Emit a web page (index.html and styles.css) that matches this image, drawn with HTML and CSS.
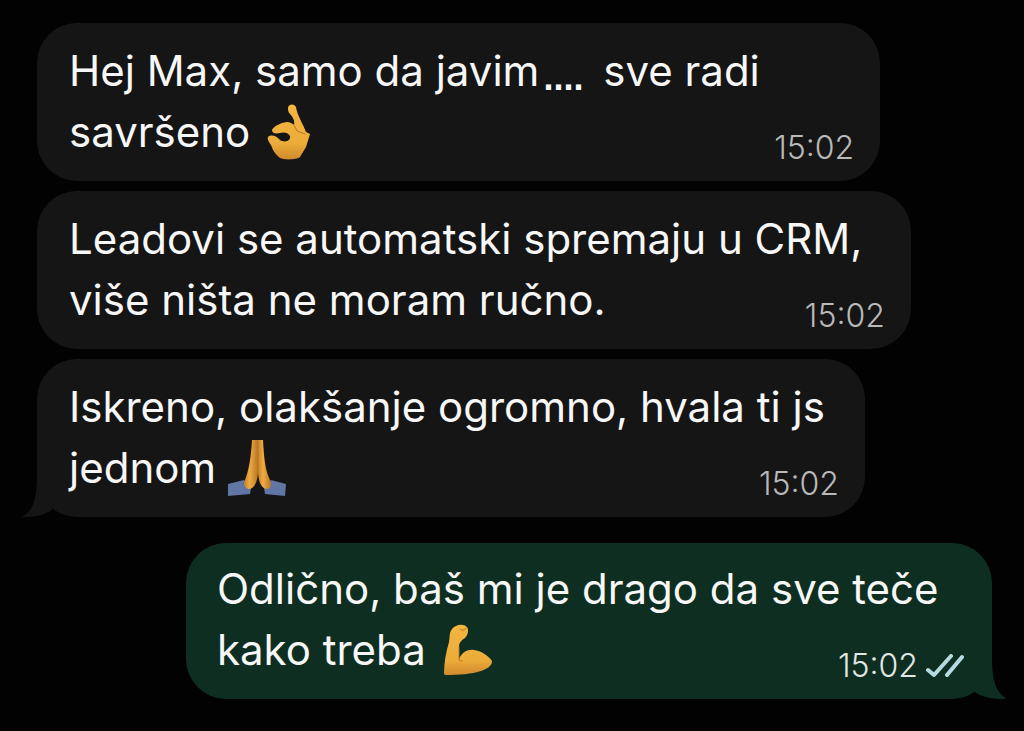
FILE: index.html
```html
<!DOCTYPE html>
<html lang="hr">

<head>
    <meta charset="UTF-8">
    <meta name="viewport" content="width=device-width, initial-scale=1.0">
    <title>Chat</title>
    <link rel="stylesheet" href="styles.css">
</head>

<body>
    <!-- shared emoji colours -->
    <svg class="defs" width="0" height="0" aria-hidden="true">
        <defs>
            <linearGradient id="skin" x1="0" y1="0" x2="0" y2="1">
                <stop offset="0" stop-color="#f3b640" />
                <stop offset="0.7" stop-color="#ecac3a" />
                <stop offset="1" stop-color="#d08a2c" />
            </linearGradient>
            <linearGradient id="palm" x1="0" y1="0" x2="1" y2="0">
                <stop offset="0" stop-color="#c9822a" />
                <stop offset="0.4" stop-color="#f0ac40" />
                <stop offset="1" stop-color="#b87524" />
            </linearGradient>
        </defs>
    </svg>

    <main class="chat">
        <div class="bubble first">
            <p class="text">Hej Max, samo da javim<span class="dots">....</span> sve radi<br>savršeno
                <svg class="emoji ok" viewBox="0 0 70 70" role="img" aria-label="OK">
                    <path fill="url(#skin)" d="M34 11C34 7 40 6 42 10C43 18 49 27 52 35L56 37L52 50L46 60C43 63 29 63 26 61C22 58 19 54 17 48C15 45 13 42 14 40C17 37 23 39 26 43C31 46 37 44 36 39C34 35 29 35 26 36C21 37 18 36 18 33C20 29 26 26 33 25C36 25 39 27 40 28C41 24 39 20 36 17C34 15 34 13 34 11Z" />
                    <path class="crease" d="M40 28L43 34L51 37" />
                </svg>
            </p>
            <time class="time">15:02</time>
        </div>

        <div class="bubble second">
            <p class="text">Leadovi se automatski spremaju u CRM,<br>više ništa ne moram ručno.</p>
            <time class="time">15:02</time>
        </div>

        <div class="bubble third">
            <p class="text">Iskreno, olakšanje ogromno, hvala ti js<br>jednom
                <svg class="emoji pray" viewBox="0 0 75 75" role="img" aria-label="Hvala">
                    <path fill="#6276a5" d="M8 54L24 50L31 58L30 64L8 66ZM66 54L51 50L44 58L45 64L65 66Z" />
                    <path fill="url(#palm)" d="M32 10H38V41C38 50 35 59 29 59C25 59 23 54 25 50C29 40 31 27 32 10Z" />
                    <path fill="url(#palm)" d="M43 10H38V41C38 50 41 59 47 59C51 59 52 54 50 50C45 40 44 27 43 10Z" />
                    <path class="crease" d="M38 12V44" />
                </svg>
            </p>
            <time class="time">15:02</time>
            <svg class="tail" viewBox="0 0 32 42" aria-hidden="true">
                <path d="M16 0C16 20 13 36 0 41C12 42 23 39 31 34L32 0Z" />
            </svg>
        </div>

        <div class="bubble own">
            <p class="text">Odlično, baš mi je drago da sve teče<br>kako treba
                <svg class="emoji arm" viewBox="0 0 70 70" role="img" aria-label="Snaga">
                    <path fill="url(#skin)" d="M10 58C10 48 12 37 15 27C16 22 15 18 18 14C21 10 29 8 33 12C35 15 34 20 31 23C28 25 25 27 25 32V44C28 37 34 34 40 35C47 36 54 40 58 46C58 51 53 54 47 56C38 59 25 60 12 60C10 60 10 59 10 58Z" />
                    <path class="crease" d="M26 14C27 16 31 16 32 13M25 32V45L28 46" />
                </svg>
            </p>
            <div class="time">
                <time>15:02</time>
                <svg class="checks" viewBox="0 0 38 24" role="img" aria-label="Pročitano">
                    <path d="M2 16L8 21L25 2M21 21L36 3" />
                </svg>
            </div>
            <svg class="tail" viewBox="0 0 32 42" aria-hidden="true">
                <path d="M18 0C18 20 21 34 32 40C30 42 9 41 1 34L0 0Z" />
            </svg>
        </div>
    </main>
</body>

</html>
```
FILE: styles.css
```css
* {
    box-sizing: border-box;
}

body {
    margin: 0;
    background-color: #020202;
    font-family: Inter, "Liberation Sans", sans-serif;
}

.defs {
    position: absolute;
}

.chat {
    display: flex;
    flex-direction: column;
    align-items: flex-start;
    gap: 10px;
    padding: 23px 32px 32px 37px;
}

/* text and time share one cell, time sits in the corner */
.bubble {
    position: relative;
    display: grid;
    padding: 17px 26px 19px 32px;
    border-radius: 40px;
    background-color: #151515;
    color: #f7f7f7;
}

.first {
    width: 88.3%;
}

.second {
    width: 91.5%;
}

.third {
    width: 86.7%;
}

.own {
    width: 84.4%;
    align-self: flex-end;
    margin-top: 16px;
    padding: 15px 28px 19px 31px;
    background-color: #0e2e21;
}

.text {
    grid-area: 1 / 1;
    margin: 0;
    font-size: 42px;
    line-height: 61px;
    white-space: nowrap;
}

.dots {
    margin: 0 8px 0 4px;
    font-family: "Liberation Sans", sans-serif;
    font-size: 36px;
    font-weight: bold;
    line-height: 1;
    vertical-align: -4px;
}

.time {
    grid-area: 1 / 1;
    align-self: end;
    justify-self: end;
    display: flex;
    align-items: center;
    gap: 8px;
    margin-bottom: -2px;
    font-size: 32px;
    font-weight: 300;
    line-height: 32px;
    color: #b9b9b9;
}

.own .time {
    color: #e1e8e4;
}

.time time {
    margin: 0;
}

.checks {
    width: 38px;
    height: 24px;
    fill: none;
    stroke: #b5dbe0;
    stroke-width: 4;
    stroke-linecap: round;
    stroke-linejoin: round;
}

/* emoji */
.emoji {
    width: 70px;
    height: 70px;
    margin: -12px -12px -12px -8px;
    vertical-align: -8px;
}

.pray {
    width: 75px;
    height: 75px;
    vertical-align: -10px;
}

.arm {
    margin-left: -4px;
}

.crease {
    fill: none;
    stroke: #b87825;
    stroke-width: 1;
    stroke-linecap: round;
}

.tail {
    position: absolute;
    bottom: -1px;
    left: -16px;
    width: 32px;
    height: 42px;
    fill: #151515;
}

.own .tail {
    left: auto;
    right: -14px;
    fill: #0e2e21;
}
```
